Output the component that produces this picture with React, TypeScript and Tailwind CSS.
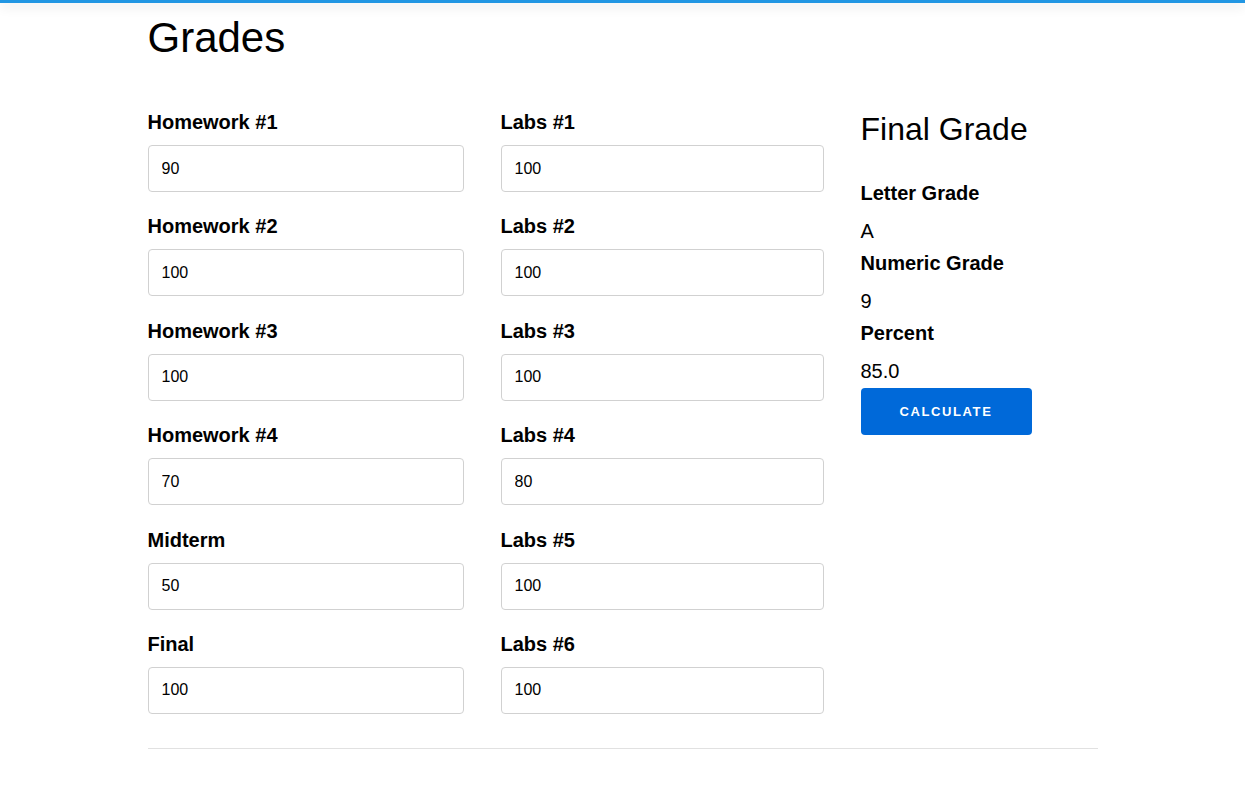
import { useState } from 'react';

const LEFT = [
  { key: 'hw1', label: 'Homework #1', value: '90' },
  { key: 'hw2', label: 'Homework #2', value: '100' },
  { key: 'hw3', label: 'Homework #3', value: '100' },
  { key: 'hw4', label: 'Homework #4', value: '70' },
  { key: 'mid', label: 'Midterm', value: '50' },
  { key: 'fin', label: 'Final', value: '100' },
];

const RIGHT = [
  { key: 'lab1', label: 'Labs #1', value: '100' },
  { key: 'lab2', label: 'Labs #2', value: '100' },
  { key: 'lab3', label: 'Labs #3', value: '100' },
  { key: 'lab4', label: 'Labs #4', value: '80' },
  { key: 'lab5', label: 'Labs #5', value: '100' },
  { key: 'lab6', label: 'Labs #6', value: '100' },
];

type Field = { key: string; label: string; value: string };

function Column({ fields, values, onChange }: { fields: Field[]; values: Record<string, string>; onChange: (k: string, v: string) => void }) {
  return (
    <div className="flex flex-col">
      {fields.map((f) => (
        <div key={f.key} className="mb-[22.4px]">
          <label className="block text-[20px] leading-[24px] font-bold text-black mb-[11px]">{f.label}</label>
          <input
            type="text"
            value={values[f.key]}
            onChange={(e) => onChange(f.key, e.target.value)}
            className="block w-full h-[47px] px-[13px] border border-[#d1d1d1] rounded-[4px] text-[16px] text-black bg-white focus:outline-none focus:border-[#33c3f0]"
          />
        </div>
      ))}
    </div>
  );
}

export default function App() {
  const [values, setValues] = useState<Record<string, string>>(
    Object.fromEntries([...LEFT, ...RIGHT].map((f) => [f.key, f.value]))
  );
  const onChange = (k: string, v: string) => setValues((s) => ({ ...s, [k]: v }));

  return (
    <div className="min-h-screen bg-white text-black" style={{ fontFamily: '"Liberation Sans", Arial, sans-serif' }}>
      <div className="h-[3px] bg-[#2196e3] shadow-[0_3px_12px_rgba(0,0,0,0.16)]" />
      <div className="mx-auto w-[950px]">
        <h1 className="mt-[14px] text-[42px] leading-[42px] font-normal">Grades</h1>

        <div className="mt-[51px] grid grid-cols-[316px_323px_1fr] gap-x-[37px]">
          <Column fields={LEFT} values={values} onChange={onChange} />
          <Column fields={RIGHT} values={values} onChange={onChange} />

          <div className="flex flex-col -mt-px">
            <h2 className="text-[32px] leading-[40px] font-normal">Final Grade</h2>
            <div className="mt-[32px] text-[20px] leading-[24px] font-bold">Letter Grade</div>
            <div className="mt-[14px] text-[20px] leading-[24px]">A</div>
            <div className="mt-[8px] text-[20px] leading-[24px] font-bold">Numeric Grade</div>
            <div className="mt-[14px] text-[20px] leading-[24px]">9</div>
            <div className="mt-[8px] text-[20px] leading-[24px] font-bold">Percent</div>
            <div className="mt-[14px] text-[20px] leading-[24px]">85.0</div>
            <button className="mt-[5px] w-[171px] h-[47px] rounded-[4px] bg-[#0069d9] text-white text-[13px] font-bold uppercase tracking-[1.6px]">
              Calculate
            </button>
          </div>
        </div>

        <hr className="mt-[11.6px] border-0 border-t border-[#e1e1e1]" />
      </div>
    </div>
  );
}
